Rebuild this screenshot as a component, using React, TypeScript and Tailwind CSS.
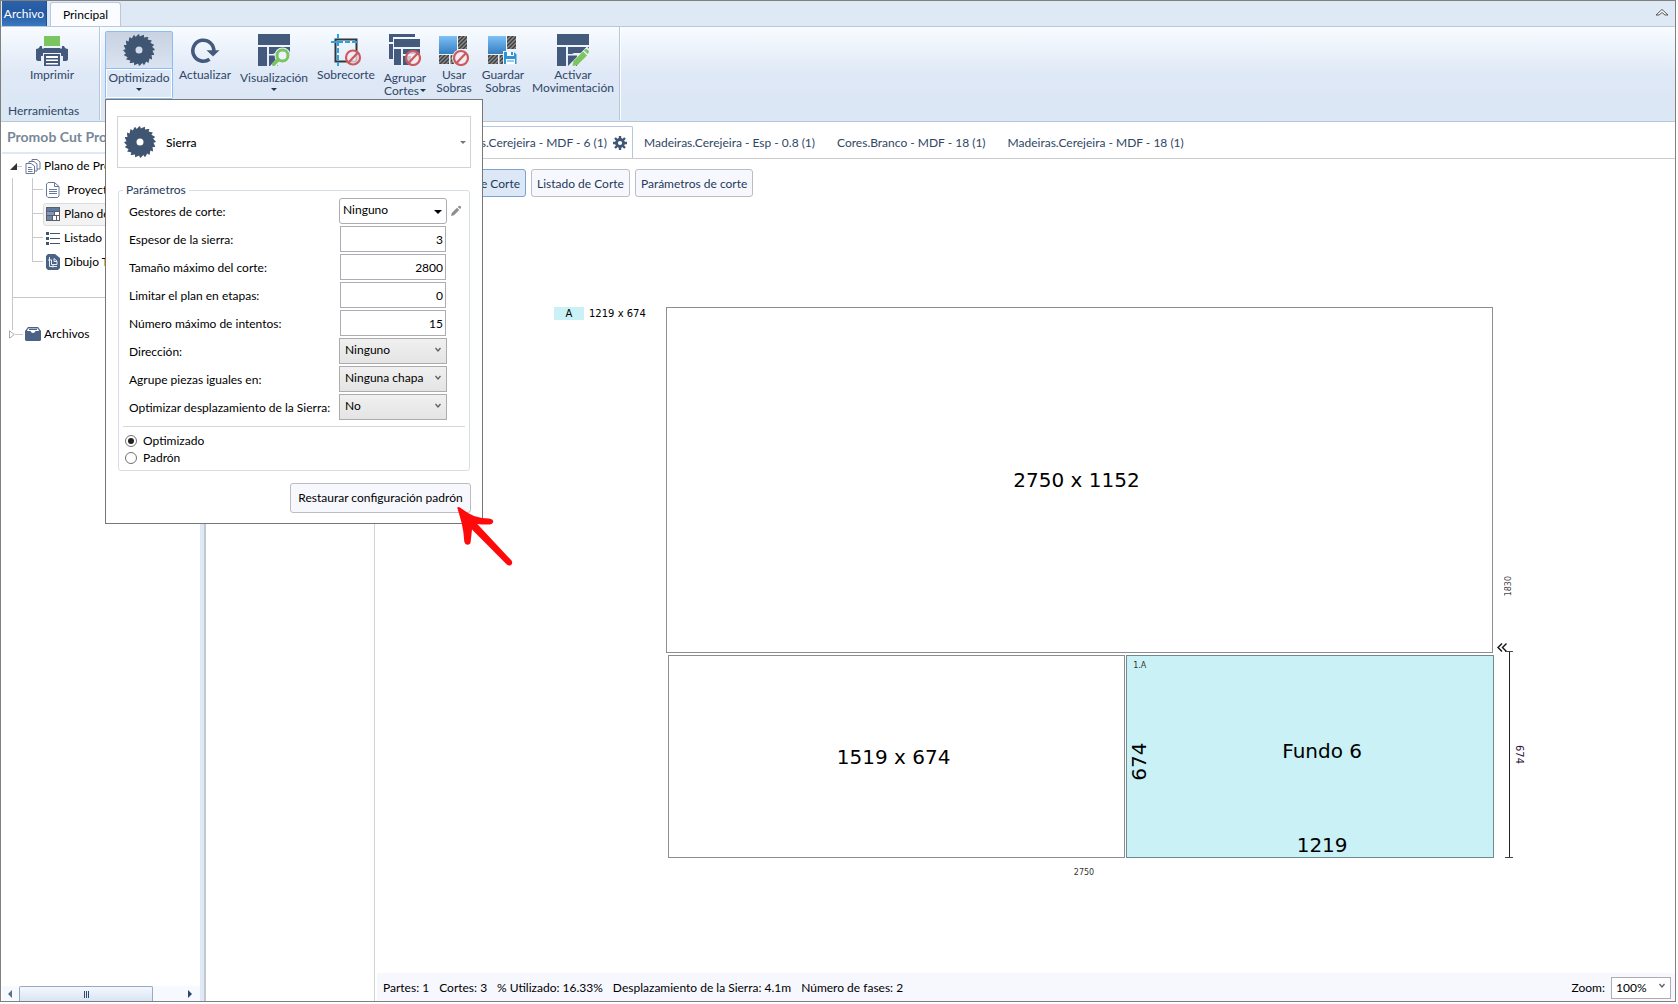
import { useState, type ReactNode } from "react";

const NAVY = "#445a7c";

/* ---------- icons ---------- */

function sawPath(teeth: number, outer: number, inner: number) {
  const step = (Math.PI * 2) / teeth;
  const points: string[] = [];

  for (let i = 0; i < teeth; i++) {
    const a = i * step;
    points.push(
      `${(16 + outer * Math.cos(a)).toFixed(2)} ${(16 + outer * Math.sin(a)).toFixed(2)}`,
      `${(16 + inner * Math.cos(a + step * 0.2)).toFixed(2)} ${(16 + inner * Math.sin(a + step * 0.2)).toFixed(2)}`,
      `${(16 + (outer - 0.8) * Math.cos(a + step * 0.75)).toFixed(2)} ${(16 + (outer - 0.8) * Math.sin(a + step * 0.75)).toFixed(2)}`
    );
  }

  return `M${points.join("L")}Z M19.500 16a3.500 3.500 0 1 0-7 0a3.500 3.500 0 1 0 7 0Z`;
}

function SawIcon() {
  return (
    <svg className="h-8 w-8 shrink-0" viewBox="0 0 32 32">
      <path d={sawPath(20, 16, 13.5)} fill="#405571" fillRule="evenodd" />
    </svg>
  );
}

function PrinterIcon() {
  return (
    <svg className="h-8 w-8" viewBox="0 0 32 32">
      <rect x="8" y="2" width="16" height="10" fill="#7ac55f" />
      <path
        d="M2 16h3.500v-1.500H8V14h16v.5h2.500V16H30q2 0 2 2v7q0 2-2 2h-3v-5H5v5H2q-2 0-2-2v-7q0-2 2-2Z"
        fill={NAVY}
      />
      <path d="M0 15q3 0 4-3h2v3h20v-3h2q1 3 4 3v6H0Z" fill={NAVY} />
      <rect x="7" y="19" width="18" height="13" fill="#edf3fb" />
      <rect x="8" y="20" width="16" height="12" fill={NAVY} />
      <path d="M10 22h12v2H10zM10 25.500h12v1.500H10zM10 29h12v1.500H10z" fill="#fff" />
    </svg>
  );
}

function RefreshIcon() {
  return (
    <svg className="h-8 w-8" viewBox="0 0 32 32">
      <path
        d="M20.500 25.200A10.500 10.500 0 1 1 24.800 17.500"
        fill="none"
        stroke={NAVY}
        strokeWidth="3.600"
      />
      <path d="M17.500 16.300h13L24 22.500Z" fill={NAVY} />
    </svg>
  );
}

function Planks() {
  return (
    <g fill={NAVY}>
      <rect x="0" y="0" width="32" height="11" />
      <rect x="0" y="13" width="9" height="19" />
      <path d="M11 13h21v6H17l-2 1h-4Z" />
      <path d="M11 21.500h9V32h-9Z" />
    </g>
  );
}

function ViewIcon() {
  return (
    <svg className="h-8 w-8" viewBox="0 0 32 32">
      <Planks />
      <circle cx="24.500" cy="21.500" r="8" fill="#eaf0f9" />
      <path d="m12 32 7-8 4 4-4 4Z" fill="#eaf0f9" />
      <circle cx="24.500" cy="21.500" r="5.500" fill="#eef3fb" stroke="#7ac55f" strokeWidth="3" />
      <path d="m14.500 31.500 6-6" stroke="#7ac55f" strokeWidth="3.500" />
    </svg>
  );
}

function Forbidden({ x = 22, y = 23.5 }: { x?: number; y?: number }) {
  return (
    <g transform={`translate(${x} ${y})`} fill="none" stroke="#cb5a5e">
      <circle r="7" strokeWidth="2.200" fill="#f6e9ef" fillOpacity=".75" />
      <path d="m-4.500 5 9.500-10" strokeWidth="2.200" />
    </g>
  );
}

function OvercutIcon() {
  return (
    <svg className="h-8 w-8" viewBox="0 0 32 32">
      <rect x="5.500" y="5.500" width="21" height="22" fill="none" stroke="#34353b" strokeWidth="2" />
      <path
        d="M8 0v32M1 8h28"
        fill="none"
        stroke="#25a4e6"
        strokeWidth="2"
        strokeDasharray="5 2"
      />
      <Forbidden x={23} />
    </svg>
  );
}

function GroupIcon() {
  return (
    <svg className="h-8 w-8" viewBox="0 0 32 32">
      <g fill={NAVY}>
        <path d="M0 0h26v3H4v5H0ZM0 10h4v15H0Z" />
        <path d="M5 5h26v8H5zM5 15h7v16H5zM14 15h17v5H14zM14 22h8v9h-8z" />
      </g>
      <Forbidden x={24} y={24} />
    </svg>
  );
}

function OffcutBase() {
  return (
    <>
      <defs>
        <linearGradient id="sheet" x1="0" y1="0" x2="0" y2="1">
          <stop offset="0" stopColor="#7dc1f8" />
          <stop offset="1" stopColor="#367dbd" />
        </linearGradient>
        <pattern id="hatch" width="4" height="4" patternUnits="userSpaceOnUse">
          <rect width="4" height="4" fill="#8b8b8b" />
          <path d="M-1 5 5-1M-1 1 1-1M3 5 5 3" stroke="#3d3d3d" strokeWidth="1.400" />
        </pattern>
      </defs>
      <path d="M1 2h18v18H1z" fill="url(#sheet)" />
      <path d="M20 2h9v13h-9zM1 21h10v9H1zM12.500 21h5v9h-5z" fill="url(#hatch)" />
    </>
  );
}

function UseOffcutsIcon() {
  return (
    <svg className="h-8 w-8" viewBox="0 0 32 32">
      <OffcutBase />
      <circle cx="23" cy="24" r="9" fill="#eaf0f9" />
      <Forbidden x={23} y={24} />
    </svg>
  );
}

function SaveOffcutsIcon() {
  return (
    <svg className="h-8 w-8" viewBox="0 0 32 32">
      <OffcutBase />
      <rect x="16" y="17" width="14" height="14" fill="#eaf0f9" />
      <path d="M17 18h10l2.500 2.500V30H17Z" fill="#2f93d8" />
      <path d="M20 18h7v4h-7zM19 25h9v5h-9z" fill="#fff" />
      <path d="M24 18h2v3h-2zM20 26.500h7v1h-7z" fill="#2f93d8" />
    </svg>
  );
}

function MoveIcon() {
  return (
    <svg className="h-8 w-8" viewBox="0 0 32 32">
      <Planks />
      <path d="M11 32 30 12.500l4 4L18.500 32Z" fill="#eaf0f9" />
      <path d="m15.500 32 1-5L26 17.500l4 4L20.500 31Z" fill="#7ac55f" />
      <path d="m27 16.500 1-1q1.500-1 3 .5t.5 3l-1 1Z" fill="#7ac55f" />
    </svg>
  );
}

function GearIcon() {
  return (
    <svg className="h-[14px] w-[14px]" viewBox="0 0 14 14">
      <circle cx="7" cy="7" r="3.500" fill="none" stroke="#3f5675" strokeWidth="2.800" />
      <path
        d="M7 0v3M7 11v3M0 7h3M11 7h3M2 2l2 2M10 10l2 2M12 2l-2 2M4 10l-2 2"
        stroke="#3f5675"
        strokeWidth="2.400"
      />
    </svg>
  );
}

function PencilIcon() {
  return (
    <svg className="h-3 w-3" viewBox="0 0 12 12">
      <path d="m1 11 .8-3L7 2.800l2.200 2.200L4 10.200ZM7.800 2l1-1q1-.7 1.800.2t.4 1.900l-1 1Z" fill="#8d8d8d" />
    </svg>
  );
}

function Chevron() {
  return (
    <svg className="h-[6px] w-[6px]" viewBox="0 0 6 6">
      <path d="m.5 1 2.500 3 2.500-3" fill="none" stroke="#606060" strokeWidth="1.300" />
    </svg>
  );
}

function Caret({ className = "text-[#1f3554]" }: { className?: string }) {
  return (
    <svg className={`h-[3px] w-[6px] shrink-0 ${className}`} viewBox="0 0 6 3">
      <path d="M0 0h6L3 3Z" fill="currentColor" />
    </svg>
  );
}

function DocsIcon() {
  return (
    <svg className="h-4 w-4 shrink-0" viewBox="0 0 16 16" fill="#fff" stroke="#66799a">
      <path d="M7 1.500h5l3 2.500v7H7Z" />
      <path d="M4 3.500h5l3 2.500v7H4Z" />
      <path d="M1 5.500h5L9.500 8v7.500H1Z" />
      <path d="M3 9.500h3.500M3 11.500h4.500M3 13.500h4.500" />
    </svg>
  );
}

function DocIcon() {
  return (
    <svg className="h-4 w-4 shrink-0" viewBox="0 0 16 16" fill="none" stroke="#66799a">
      <path d="M3 .5h6.500l4.500 4v9.500l-1.500 1.500h-9.500L1.500 14V2Z" fill="#fff" />
      <path d="M9.500.5v4H14M4 7.500h8M4 9.500h8M4 11.500h8" />
    </svg>
  );
}

function PlanIcon() {
  return (
    <svg className="h-4 w-4 shrink-0" viewBox="0 0 16 16">
      <rect x="1" y="1" width="14" height="14" fill="#5b6068" />
      <rect x="2" y="2" width="12" height="3" fill="#5f7ba5" />
      <rect x="2" y="6" width="7" height="3" fill="#8498b5" />
      <path d="M10 6h4v3h-4zM8 10h6v4H8z" fill="#fff" />
      <path d="M2 10h5v4H2z" fill="#6f86a8" />
      <path d="M11 10h1v4h-1z" fill="#5b6068" />
    </svg>
  );
}

function ListIcon() {
  return (
    <svg className="h-4 w-4 shrink-0" viewBox="0 0 16 16" fill="#405571">
      <path d="M1 2h3v3H1zM1 7h3v3H1zM1 12h3v3H1zM5 3h10v1H5zM5 8h10v1H5zM5 13h10v1H5z" />
    </svg>
  );
}

function DrawingIcon() {
  return (
    <svg className="h-4 w-4 shrink-0" viewBox="0 0 16 16">
      <path d="M3 0h7l5 4v10l-2 2H3l-2-2V2Z" fill="#4c6285" />
      <path
        d="M4.500 3v9.500H12M6.500 5.500v5H12v-3H9v-3M9 4.500 12 7M3 6h3M8 10.500v3"
        fill="none"
        stroke="#e8eef7"
      />
    </svg>
  );
}

function ArchiveIcon() {
  return (
    <svg className="h-4 w-4 shrink-0" viewBox="0 0 16 16">
      <path d="M3 1h10l3 4v9l-1 1H1l-1-1V5Z" fill="#4c6285" />
      <path d="M3 2.500h10L14 5h-3.500q-.5 2-2.500 2T5.500 5H2Z" fill="#fff" />
      <path d="M4 3.500h8" stroke="#4c6285" />
    </svg>
  );
}

/* ---------- ribbon ---------- */

function RibbonButton({
  icon,
  label,
  width,
  drop = false
}: {
  icon: ReactNode;
  label: string[];
  width: string;
  drop?: boolean;
}) {
  return (
    <button
      type="button"
      className={`flex h-[68px] shrink-0 flex-col items-center whitespace-nowrap pt-[3px] leading-[13px] text-[#2f4666] ${width}`}
    >
      {icon}
      <span className={drop ? "mt-[5px]" : "mt-[2px]"}>{label[0]}</span>
      {label[1] ? (
        <span className="flex items-center gap-px">
          {label[1]}
          {drop ? <Caret /> : null}
        </span>
      ) : null}
      {drop && !label[1] ? (
        <span className="mt-1">
          <Caret />
        </span>
      ) : null}
    </button>
  );
}

const inputClass =
  "h-[26px] w-full border border-[#abadb3] bg-white px-[2px] text-right text-xs outline-none";

function NumberField({ id, label, value }: { id: string; label: string; value: string }) {
  return (
    <>
      <label htmlFor={id} className="pt-[2px]">
        {label}
      </label>
      <span className="flex w-[108px] px-px">
        <input id={id} defaultValue={value} className={inputClass} />
      </span>
      <span />
    </>
  );
}

function SelectField({ id, label, value }: { id: string; label: string; value: string }) {
  return (
    <>
      <label htmlFor={id} className="pt-[2px]">
        {label}
      </label>
      <span className="relative w-[108px]">
        <select
          id={id}
          className="block h-[26px] w-full appearance-none border border-[#acacac] bg-linear-to-b from-[#f0f0f0] to-[#e4e4e4] pb-[2px] pl-[5px] outline-none"
        >
          <option>{value}</option>
        </select>
        <span className="pointer-events-none absolute right-[6px] top-[9px]">
          <Chevron />
        </span>
      </span>
      <span />
    </>
  );
}

function PointerArrow() {
  return (
    <svg
      className="pointer-events-none absolute left-[349px] top-[404px] h-[64px] w-[60px]"
      viewBox="0 0 60 64"
    >
      <path
        d="M2.300 3.700Q3 2.500 5 3.500 12 9 19 12q8 2.500 15 2.500 4 .5 4.300 3-.6 2.800-4 3-6 .3-12-.5L56.500 56.500q1.500 2.500-.2 4.200-2 1.800-4.500-.2L17 25.500q-.7 7-1.500 13.500-1 2-3.200 1.800-2.500-.4-3-3-.5-10-2.600-18.500Q4.500 11 2.300 3.700Z"
        fill="#ff0a0a"
      />
    </svg>
  );
}

function SawSettings() {
  const [mode, setMode] = useState("optimizado");

  return (
    <div className="absolute left-0 top-full z-10 w-[378px] whitespace-nowrap border border-[#777] bg-white px-[11px] pb-[10px] pt-4 text-black">
      <button
        type="button"
        className="flex h-[52px] w-full items-center border border-[#d3d3d3] pl-[6px] pr-1 text-left"
      >
        <SawIcon />
        <span className="ml-[10px] flex-1 pt-[2px] font-medium">Sierra</span>
        <Caret className="text-[#777]" />
      </button>

      <fieldset className="mx-px mt-[13px] h-[290px] rounded-[3px] border border-[#d5dfe5] px-1">
        <legend className="px-[3px] leading-[18px] text-[#1e395b]">Parámetros</legend>

        <div className="-mt-px grid grid-cols-[210px_108px_1fr] items-center gap-y-[2px] pl-[6px]">
          <label htmlFor="gestores" className="pt-[2px]">
            Gestores de corte:
          </label>
          <span className="relative w-[108px]">
            <select
              id="gestores"
              className="block h-[26px] w-full appearance-none rounded-[3px] border border-[#abadb3] bg-white pb-[2px] pl-[3px] outline-none"
            >
              <option>Ninguno</option>
            </select>
            <span className="pointer-events-none absolute right-[5px] top-3">
              <svg className="h-1 w-2" viewBox="0 0 8 4">
                <path d="M0 0h8L4 4Z" />
              </svg>
            </span>
          </span>
          <button type="button" aria-label="Editar" className="ml-[3px]">
            <PencilIcon />
          </button>

          <NumberField id="espesor" label="Espesor de la sierra:" value="3" />
          <NumberField id="tamano" label="Tamaño máximo del corte:" value="2800" />
          <NumberField id="etapas" label="Limitar el plan en etapas:" value="0" />
          <NumberField id="intentos" label="Número máximo de intentos:" value="15" />
          <SelectField id="direccion" label="Dirección:" value="Ninguno" />
          <SelectField id="agrupe" label="Agrupe piezas iguales en:" value="Ninguna chapa" />
          <SelectField id="desplazamiento" label="Optimizar desplazamiento de la Sierra:" value="No" />
        </div>

        <div className="mt-[6px] border-t border-[#d8d8d8] pl-[2px] pt-[5px]">
          {[
            ["optimizado", "Optimizado"],
            ["padron", "Padrón"]
          ].map(([value, text]) => (
            <label key={value} className="flex h-[17px] items-center gap-[6px]">
              <input
                type="radio"
                name="modo"
                checked={mode === value}
                onChange={() => setMode(value)}
                className="h-3 w-3 appearance-none rounded-full border border-[#707070] bg-white bg-clip-content p-[2px] checked:bg-[#222]"
              />
              {text}
            </label>
          ))}
        </div>
      </fieldset>

      <div className="mt-3 flex justify-end">
        <button
          type="button"
          className="h-[30px] w-[181px] rounded-[3px] border border-[#bcbcc2] bg-[#f7f8fe]"
        >
          Restaurar configuración padrón
        </button>
      </div>

      <PointerArrow />
    </div>
  );
}

function Ribbon() {
  return (
    <div className="flex h-[95px] shrink-0 border-b border-[#b9c6d8] bg-linear-to-b from-[#f8fcff] via-[#dfe8f6] via-50% to-[#dae7f4] pb-px">
      <div className="flex w-[99px] shrink-0 flex-col justify-between border-r border-[#b8c7dc] pt-1">
        <div className="flex pl-[13px]">
          <RibbonButton icon={<PrinterIcon />} label={["Imprimir"]} width="w-[76px]" />
        </div>
        <span className="pb-[1px] pl-[7px] text-[#2f4666]">Herramientas</span>
      </div>

      <div className="flex shrink-0 border-l border-r border-l-white border-r-[#b8c7dc] pl-1 pt-1">
        <div className="relative self-start">
          <button
            type="button"
            aria-expanded="true"
            className="flex h-[68px] w-[68px] flex-col items-center whitespace-nowrap rounded-[2px] border border-[#8abcf5] leading-[13px] text-[#2f4666]"
          >
            <span className="flex h-[37px] w-full justify-center border-b border-[#8abcf5] bg-linear-to-b from-[#c9d2e0] to-[#dae3f1] pt-[2px]">
              <SawIcon />
            </span>
            <span className="flex w-full flex-1 flex-col items-center gap-1 border border-white pt-[1px]">
              Optimizado
              <Caret />
            </span>
          </button>
          <SawSettings />
        </div>
        <RibbonButton icon={<RefreshIcon />} label={["Actualizar"]} width="w-[64px]" />
        <RibbonButton icon={<ViewIcon />} label={["Visualización"]} width="w-[74px]" drop />
        <RibbonButton icon={<OvercutIcon />} label={["Sobrecorte"]} width="w-[70px]" />
        <RibbonButton icon={<GroupIcon />} label={["Agrupar", "Cortes"]} width="w-[48px]" drop />
        <RibbonButton icon={<UseOffcutsIcon />} label={["Usar", "Sobras"]} width="w-[50px]" />
        <RibbonButton icon={<SaveOffcutsIcon />} label={["Guardar", "Sobras"]} width="w-[48px]" />
        <RibbonButton icon={<MoveIcon />} label={["Activar", "Movimentación"]} width="w-[92px]" />
      </div>
      <div className="border-l border-white" />
    </div>
  );
}

/* ---------- side tree ---------- */

const plans = [
  { name: "Proyecto", icon: <DocIcon />, indent: true },
  { name: "Plano de Corte", icon: <PlanIcon />, selected: true },
  { name: "Listado de Corte", icon: <ListIcon /> },
  { name: "Dibujo Técnico", icon: <DrawingIcon /> }
];

function SideTree() {
  return (
    <aside className="flex w-[203px] shrink-0 flex-col overflow-hidden border-r-4 border-[#dfe8f6] pl-px">
      <h1 className="h-8 shrink-0 whitespace-nowrap border-b-2 border-[#dfe8f6] pl-[5px] text-sm font-bold leading-[30px] text-[#778899]">
        Promob Cut Pro
      </h1>

      <div className="flex-1 whitespace-nowrap">
        <div className="flex h-6 items-center pl-2">
          <svg className="h-[7px] w-[7px]" viewBox="0 0 7 7">
            <path d="M7 0v7H0Z" fill="#333" />
          </svg>
          <span className="mr-[3px] h-px w-[5px] bg-[#c8c8c8]" />
          <DocsIcon />
          <span className="ml-[3px]">Plano de Producción</span>
        </div>

        <ul className="ml-[10px] border-b border-l border-[#c8c8c8] pb-[23px] pl-[19px]">
          {plans.map((plan, index) => (
            <li key={plan.name} className="flex h-6 items-center">
              <span className="flex h-6 w-[11px] shrink-0 flex-col">
                <span className="h-3 border-b border-l border-[#c8c8c8]" />
                <span
                  className={
                    index < plans.length - 1 ? "h-3 border-l border-[#c8c8c8]" : "h-3"
                  }
                />
              </span>
              <span
                className={`flex h-[23px] flex-1 items-center rounded-[3px] border pl-px ${
                  plan.selected ? "border-[#dcdcdc] bg-[#f3f3f3]" : "border-transparent"
                }`}
              >
                {plan.icon}
                <span className={plan.indent ? "ml-[6px]" : "ml-[3px]"}>{plan.name}</span>
              </span>
            </li>
          ))}
        </ul>

        <div className="-mb-2 ml-[10px] h-8 border-l border-[#c8c8c8]" />
        <div className="flex h-6 items-center pl-[7px]">
          <svg className="h-[9px] w-[6px]" viewBox="0 0 6 9">
            <path d="M.5.8 5.300 4.500.5 8.200Z" fill="#fff" stroke="#aaa" />
          </svg>
          <span className="mr-[2px] h-px w-[8px] bg-[#c8c8c8]" />
          <ArchiveIcon />
          <span className="ml-[3px]">Archivos</span>
        </div>
      </div>

      <div className="flex h-[15px] shrink-0 items-center bg-[#f6f9fe] pl-[6px] pr-2">
        <svg className="h-2 w-1" viewBox="0 0 4 8">
          <path d="M4 0v8L0 4Z" fill="#5b6f8d" />
        </svg>
        <span className="ml-[7px] flex h-[15px] w-[134px] items-center justify-center gap-px rounded-t-[2px] border border-b-0 border-[#96a9c6] bg-linear-to-b from-[#f4f8fd] to-[#d8e5f5]">
          <span className="h-[7px] w-px bg-[#33496b]" />
          <span className="h-[7px] w-px bg-[#33496b]" />
          <span className="h-[7px] w-px bg-[#33496b]" />
        </span>
        <span className="flex-1" />
        <svg className="h-2 w-1" viewBox="0 0 4 8">
          <path d="M0 0v8l4-4Z" fill="#2f4666" />
        </svg>
      </div>
    </aside>
  );
}

/* ---------- cutting plan ---------- */

function CuttingPlan() {
  return (
    <div className="flex flex-1 items-start pl-[179px] pr-[146px] pt-[110px] font-['DejaVu_Sans',sans-serif] text-black">
      <div className="flex w-[112px] shrink-0 items-center gap-[5px] text-[10px] leading-[13px]">
        <span className="w-[30px] bg-[#caf1f5] text-center">A</span>
        <span className="whitespace-nowrap">1219 x 674</span>
      </div>

      <div className="min-w-0 flex-1">
        <div className="flex aspect-[2750/1830] flex-col gap-[2px] text-xl">
          <div className="mr-px flex flex-[345] items-center justify-center border border-[#8e8e8e]">
            <span className="pr-[6px]">2750 x 1152</span>
          </div>
          <div className="ml-[2px] flex flex-[203] gap-px">
            <div className="flex flex-[458] items-center justify-center border border-[#8e8e8e]">
              <span className="pr-[6px]">1519 x 674</span>
            </div>
            <div className="flex flex-[368] flex-col border border-[#6f8b90] bg-[#caf1f5]">
              <span className="h-5 pl-[6px] pt-[2px] text-[8px] leading-4 text-[#333]">1.A</span>
              <div className="flex flex-1">
                <span className="flex w-[24px] rotate-180 items-center justify-center pt-[10px] leading-6 [writing-mode:vertical-rl]">
                  674
                </span>
                <div className="flex flex-1 flex-col items-center">
                  <span className="flex flex-1 items-center pb-2">Fundo 6</span>
                  <span className="leading-6">1219</span>
                </div>
              </div>
            </div>
          </div>
        </div>
        <p className="pl-2 pt-2 text-center text-[8px] leading-[14px] text-[#333]">2750</p>
      </div>

      <div className="relative w-[35px] shrink-0 self-stretch">
        <span className="absolute left-[9px] top-[269px] rotate-180 text-[8px] leading-3 text-[#444] [writing-mode:vertical-rl]">
          1830
        </span>
        <svg className="absolute left-[3px] top-[336px] h-[9px] w-[10px]" viewBox="0 0 10 9">
          <path d="M5 .5 1 4.500l4 4M9.500.5l-4 4 4 4" fill="none" stroke="#111" strokeWidth="1.400" />
        </svg>
        <div className="absolute left-[11px] top-[344px] flex h-[207px] w-[8px] justify-center border-y border-[#444]">
          <span className="w-px bg-[#222]" />
        </div>
        <span className="absolute left-[19px] top-[438px] text-[10px] leading-3 text-[#2d1440] [writing-mode:vertical-rl]">
          674
        </span>
      </div>
    </div>
  );
}

function Workspace() {
  const tabs = [
    "Madeiras.Cerejeira - Esp - 0.8 (1)",
    "Cores.Branco - MDF - 18 (1)",
    "Madeiras.Cerejeira - MDF - 18 (1)"
  ];
  const viewClass = "h-7 whitespace-nowrap rounded-[3px] border px-[5px] pt-px text-[#1e395b]";

  return (
    <main className="flex min-w-0 flex-1 flex-col border-l border-[#d2d2d2]">
      <nav className="flex h-[37px] shrink-0 items-end whitespace-nowrap border-b border-[#ccc] pl-[52px] text-[#2f4666]">
        <button
          type="button"
          className="flex h-8 w-[206px] items-center justify-end gap-[6px] rounded-t-[2px] border border-b-0 border-[#b5c7de] pr-[5px]"
        >
          Madeiras.Cerejeira - MDF - 6 (1)
          <GearIcon />
        </button>
        {tabs.map((tab) => (
          <button key={tab} type="button" className="h-8 px-[11px] pt-px">
            {tab}
          </button>
        ))}
      </nav>

      <div className="flex shrink-0 gap-[5px] pl-[52px] pt-[10px]">
        <button
          type="button"
          className={`${viewClass} w-[99px] border-[#7ba2d3] bg-[#dce8f6] text-right`}
        >
          Plano de Corte
        </button>
        <button type="button" className={`${viewClass} border-[#bcbcc2] bg-[#f7f8fe]`}>
          Listado de Corte
        </button>
        <button type="button" className={`${viewClass} border-[#bcbcc2] bg-[#f7f8fe]`}>
          Parámetros de corte
        </button>
      </div>

      <CuttingPlan />

      <footer className="ml-[2px] flex h-7 shrink-0 items-center gap-[10px] whitespace-nowrap bg-[#f7f8fe] pl-[6px] pr-1 pt-px">
        <span>Partes: 1</span>
        <span>Cortes: 3</span>
        <span>% Utilizado: 16.33%</span>
        <span>Desplazamiento de la Sierra: 4.1m</span>
        <span>Número de fases: 2</span>
        <label htmlFor="zoom" className="ml-auto">
          Zoom:
        </label>
        <span className="relative -ml-1 w-[60px]">
          <select
            id="zoom"
            className="block h-[22px] w-full appearance-none border border-[#abadb3] bg-white pl-1 outline-none"
          >
            <option>100%</option>
          </select>
          <span className="pointer-events-none absolute right-[6px] top-[6px]">
            <Chevron />
          </span>
        </span>
      </footer>
    </main>
  );
}

export default function App() {
  return (
    <div className="h-screen bg-white pb-[2px] pr-[2px] font-[Lato,'Noto_Sans',sans-serif] text-xs text-black">
      <div className="flex h-full flex-col border border-[#808080]">
        <header className="flex h-[26px] shrink-0 items-end border-b border-[#b8c8de] bg-[#dfe8f5] pl-px">
          <button
            type="button"
            className="h-[25px] w-[45px] border-r border-[#1f4f94] bg-linear-to-b from-[#2a62a8] via-[#2459a3] to-[#3a7ac0] text-white"
          >
            Archivo
          </button>
          <button
            type="button"
            className="ml-[3px] h-6 w-[71px] rounded-t-[3px] border border-b-0 border-[#b8c8de] bg-[#fafcff]"
          >
            Principal
          </button>
          <button type="button" aria-label="Contraer cinta" className="mb-[10px] ml-auto mr-[6px]">
            <svg className="h-[8px] w-[14px]" viewBox="0 0 14 8">
              <path d="m1 7 6-5.500L13 7h-3L7 4.500 4 7Z" fill="#fff" stroke="#555" />
            </svg>
          </button>
        </header>

        <Ribbon />

        <div className="flex min-h-0 flex-1">
          <SideTree />
          <div className="w-[170px] shrink-0 border-l-2 border-[#c3c7ce]" />
          <Workspace />
        </div>
      </div>
    </div>
  );
}
